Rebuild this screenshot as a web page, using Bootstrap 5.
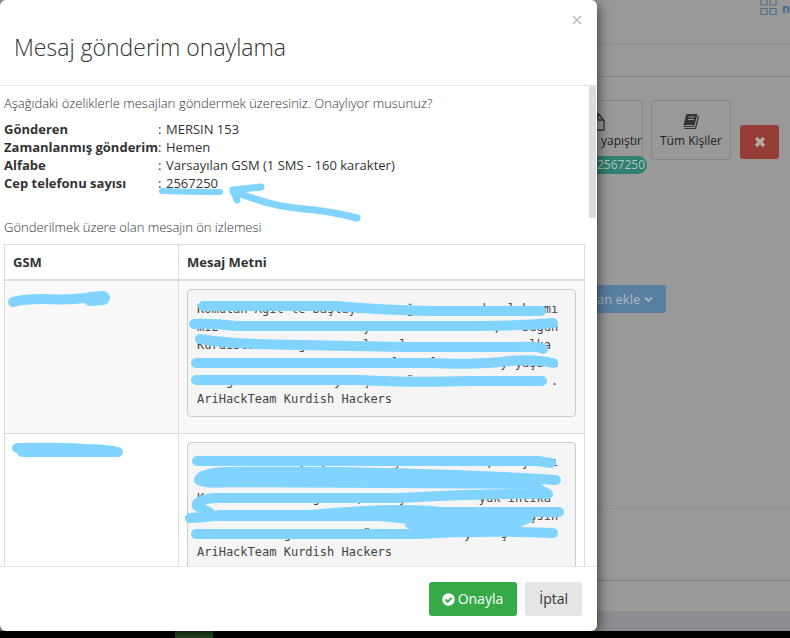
<!DOCTYPE html>
<html lang="tr">
<head>
<meta charset="utf-8">
<meta name="viewport" content="width=device-width, initial-scale=1">
<title>Mesaj gönderim onaylama</title>
<link href="https://cdn.jsdelivr.net/npm/bootstrap@5.3.0/dist/css/bootstrap.min.css" rel="stylesheet">
<style>
body{font:300 13px/18px "Open Sans",sans-serif;color:#333;background:#000;min-height:100vh;overflow:hidden}
.screen{height:calc(100vh - 7px);background:#999}
.dialog-box{background:#fff;border-radius:6px;box-shadow:0 4px 14px rgba(0,0,0,.75);z-index:2;min-width:0}
.dialog-head{height:86px;padding:10px 13px 0 14px;border-bottom:1px solid #e5e5e5}
.dialog-head h1{font-size:23px;line-height:32px;font-weight:300;margin-top:21px}
.close-x{width:13px;height:20px;color:#bbb}
.dialog-main{padding:8px 12px 0 4px;overflow:hidden;min-height:0}
.terms{grid-template-columns:154px 8px 1fr;margin:8px 0 26px;font-weight:400}
.terms dt{font-weight:700;white-space:nowrap}
.terms dd{margin:0}
.preview{margin-top:8px;table-layout:fixed;border-color:#ddd;color:#333}
.preview th{padding:7px 8px 8px;height:35px;font-weight:700;border-bottom:2px solid #ddd}
.preview td{padding:8px}
.preview .gsm{width:174px}
.preview tr.odd td{background:#f9f9f9}
.preview pre{font:12px/18px "DejaVu Sans Mono",monospace;color:#444;background:#f5f5f5;border:1px solid #ccc;border-radius:4px;padding:10px 9px 8px;margin:0 0 8px}
.ink{left:0;top:0;width:597px;height:480px;pointer-events:none}
.ink path{fill:none;stroke:#80d4ff;stroke-width:10;stroke-linecap:round;stroke-linejoin:round}
.ink .thin{stroke-width:6}
.ink .arrow{stroke-width:7}
.ink .wide{stroke-width:14}
.thumb{right:1px;top:0;width:7px;height:132px;background:#ddd}
.dialog-foot{height:65px;padding:0 15px;border-top:1px solid #e5e5e5}
.act{height:34px;border:0;font-size:14px;line-height:20px;padding:0 14px;border-radius:3px}
.act-ok{background:#35aa47;color:#fff;font-weight:400;gap:3px;padding:0 14px 0 13px}
.act-no{background:#e5e5e5;color:#333}
.backpage{width:193px;color:#222}
.topline{height:44px;border-bottom:1px solid #909090;color:#496b88;font-size:12px;line-height:18px}
.subline{height:33px;border-bottom:1px solid #858585}
.tools{margin-top:23px;gap:8px}
.tile{height:60px;border:1px solid #868686;border-radius:4px;background:transparent;color:#222;font-size:12px;line-height:18px;padding:9px 0 0}
.tile-cut{width:46px;border-left:0;border-radius:0 4px 4px 0}
.tile-all{width:80px}
.kill{width:39px;height:34px;border:0;border-radius:3px;background:#963d36;margin:25px 0 0 1px}
.count{left:0;top:56px;width:50px;height:18px;border-radius:0 9px 9px 0;background:#2f8070;color:#b4c4c0;font-size:12px;text-align:right;padding-right:6px;font-weight:400}
.add{margin-top:125px;width:69px;height:28px;border:0;border-radius:0 3px 3px 0;background:#587f9f;color:#a9b7c3;font-size:13px;font-weight:400}
.lower{margin-top:195px;height:73px;border-top:1px solid #929292;border-bottom:1px solid #808080}
.stripe{background:#8b8d90;height:20px}
.strip{height:7px;padding-left:175px}
.strip span{display:block;width:38px;height:7px;background:#2d5a27}
</style>
<script src="https://cdn.jsdelivr.net/npm/bootstrap@5.3.0/dist/js/bootstrap.bundle.min.js"></script>
</head>
<body>
<div class="screen d-flex">
  <section class="dialog-box d-flex flex-column flex-grow-1 position-relative" role="dialog" aria-labelledby="ttl">
    <header class="dialog-head flex-shrink-0">
      <button class="close-x btn p-0 border-0 float-end d-flex align-items-center" type="button" aria-label="Kapat"><svg width="12" height="12" viewBox="0 0 12 12"><path d="M2 2l8 8M10 2l-8 8" fill="none" stroke="#bbb" stroke-width="1.5"/></svg></button>
      <h1 id="ttl" class="mb-0">Mesaj gönderim onaylama</h1>
    </header>
    <div class="dialog-main position-relative flex-grow-1">
      <p class="m-0">Aşağıdaki özeliklerle mesajları göndermek üzeresiniz. Onaylıyor musunuz?</p>
      <dl class="terms d-grid">
        <dt>Gönderen</dt><dd>:</dd><dd>MERSIN 153</dd>
        <dt>Zamanlanmış gönderim</dt><dd>:</dd><dd>Hemen</dd>
        <dt>Alfabe</dt><dd>:</dd><dd>Varsayılan GSM (1 SMS - 160 karakter)</dd>
        <dt>Cep telefonu sayısı</dt><dd>:</dd><dd>2567250</dd>
      </dl>
      <p class="m-0">Gönderilmek üzere olan mesajın ön izlemesi</p>
      <table class="preview table table-bordered mb-0">
        <thead><tr><th class="gsm">GSM</th><th>Mesaj Metni</th></tr></thead>
        <tbody>
          <tr class="odd"><td></td><td><pre>Komutan Agit le başlayan     ğ         dı ılık  mı
mız                    y                 ,   bugün
Kurdista      g        l    l                 lka
                           l    f         y yaşa n
    gustos   un    y   ş     ü                   .
AriHackTeam Kurdish Hackers</pre></td></tr>
          <tr><td></td><td><pre>              ,  y         ğ            ,    y   ı
                                                 n
K               g     ,     y          yük intika
                                            yaşsin
            g          ü             y    ş
AriHackTeam Kurdish Hackers</pre></td></tr>
        </tbody>
      </table>
      <svg class="ink position-absolute" viewBox="0 86 597 480" aria-hidden="true">
        <path class="thin" d="M162 191Q190 192 220 192"/>
        <path class="arrow" d="M261 187L233 190L237 200M233 191C270 206 290 208 315 210Q338 213 357 218"/>
        <path d="M13 302C35 296 55 301 74 299Q90 297 104 298"/><path class="wide" d="M90 299L103 298"/>
        <path d="M203 306H335Q380 310 430 311H541"/>
        <path d="M194 324Q210 323 235 326H480Q520 326 553 323"/>
        <path d="M200 339Q225 344 300 345L405 347H520Q540 346 543 349"/>
        <path d="M196 363L430 363Q470 365 500 362Q532 358 553 363"/>
        <path d="M196 380L360 380Q410 383 470 381H542"/>
        <path d="M17 448Q60 447 85 449Q105 449 118 452H22"/>
        <path d="M197 461H537L551 463"/>
        <path d="M556 480Q400 470 224 472Q199 474 199 480Q205 484 230 482L530 484L548 494Q480 493 400 498H215Q195 500 197 506L210 513M190 518Q210 517 220 515H310Q400 507 440 512L559 512"/>
        <path d="M205 477L440 477L520 482M210 516H380L420 520H518M410 524H515L528 518"/>
        <path d="M196 534H420Q480 530 553 533"/>
      </svg>
      <div class="thumb position-absolute"></div>
    </div>
    <footer class="dialog-foot flex-shrink-0 d-flex align-items-center justify-content-end gap-2">
      <button class="act act-ok btn d-flex align-items-center" type="button"><svg width="13" height="13" viewBox="0 0 13 13"><circle cx="6.500" cy="6.500" r="6.200" fill="#fff"/><path d="M3.500 6.500l2.200 2.300 4-4.200" fill="none" stroke="#35aa47" stroke-width="1.900"/></svg>Onayla</button>
      <button class="act act-no btn" type="button">İptal</button>
    </footer>
  </section>
  <main class="backpage flex-shrink-0 overflow-hidden d-flex flex-column">
    <div class="topline d-flex justify-content-end gap-1 fw-bold"><svg width="18" height="16" viewBox="0 0 18 16" fill="none" stroke="#526f87" stroke-width="1.200"><path d="M1-2h6v7H1zM10-2h6v7h-6zM1 8.500h6v6H1zM10 8.500h6v6h-6z"/></svg><span>n</span></div>
    <div class="subline"></div>
    <div class="tools d-flex">
      <div class="position-relative"><button class="tile tile-cut d-flex flex-column" type="button"><svg width="8" height="22" viewBox="0 0 8 22"><path d="M0 4h1.500L7 10.500V20H0M1 4v6h6" fill="none" stroke="#333" stroke-width="1.300"/></svg><span class="ps-1">yapıştır</span></button><span class="count position-absolute">2567250</span></div>
      <button class="tile tile-all d-flex flex-column align-items-center" type="button"><svg width="18" height="22" viewBox="0 0 18 22"><path d="M5 4h10.500l-3.500 13H2.500Q1 17 1.500 15.200L4 5Q4.300 4 5 4z" fill="#333"/><path d="M16.500 6l-3 12.500H2.500" fill="none" stroke="#333" stroke-width="1.200"/><path d="M6.500 7h6M6 9.500h6M2.500 15.500h9" stroke="#999" fill="none"/></svg>Tüm Kişiler</button>
      <button class="kill d-flex align-items-center justify-content-center" type="button" aria-label="Sil"><svg width="12" height="12" viewBox="0 0 12 12"><path d="M2 2l8 8M10 2l-8 8" stroke="#b5aaa9" stroke-width="3.400"/></svg></button>
    </div>
    <button class="add d-flex align-items-center gap-1 p-0" type="button"><span>an ekle</span><svg width="9" height="7" viewBox="0 0 9 7"><path d="M1 1.500l3.500 3.500L8 1.500" fill="none" stroke="#a9b7c3" stroke-width="1.800"/></svg></button>
    <div class="lower"></div>
    <div class="flex-grow-1"></div>
    <div class="stripe"></div>
  </main>
</div>
<div class="strip"><span></span></div>
</body>
</html>
